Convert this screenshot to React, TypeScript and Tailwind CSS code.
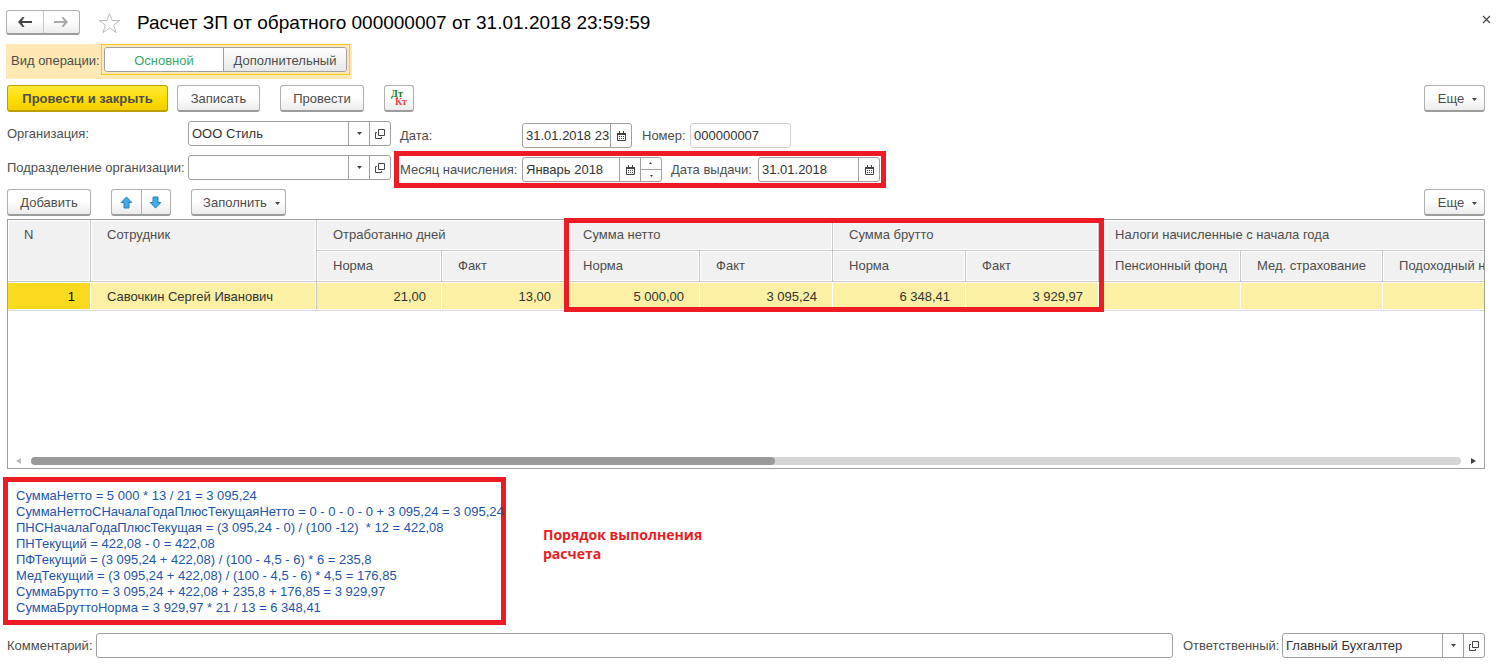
import type { ReactNode } from "react";
import clsx from "clsx";

/**
 * App.tsx
 *
 * Payroll document form ("Расчет ЗП от обратного"): command bar, document
 * header fields, employee grid and the step-by-step calculation below it.
 */

const FIELD = "flex h-[25px] overflow-hidden rounded-[3px] border border-[#a0a0a0] bg-white text-[#333]";
const INPUT = "min-w-0 flex-1 bg-transparent pl-[3px] outline-none";
const FIELD_BUTTON = "flex w-[21px] shrink-0 items-center justify-center border-l border-[#a0a0a0]";
const RAISED =
  "rounded-[3px] border border-[#b0b0b0] border-b-2 border-b-[#9c9c9c] bg-linear-to-b from-white from-45% to-[#ebebeb]";

function Caret() {
  return (
    <svg width="5" height="3" viewBox="0 0 5 3" fill="#444" aria-hidden="true">
      <path d="M0 0h5L2.5 3z" />
    </svg>
  );
}

function OpenIcon() {
  return (
    <svg width="10" height="10" viewBox="0 0 10 10" fill="none" stroke="#444" aria-hidden="true">
      <path d="M3.5.5h6v6h-6zM2 3.500H.5v6h6V8" />
    </svg>
  );
}

function CalendarIcon() {
  return (
    <svg width="9" height="10" viewBox="0 0 9 10" fill="none" stroke="#444" aria-hidden="true">
      <path d="M.5 2.500h8v7h-8z" />
      <path d="M0 3h9" strokeWidth="2" />
      <path d="M2.500 0v2M6.500 0v2" />
      <path d="M2 5.500h5M2 7.500h5" strokeDasharray="1 1" />
    </svg>
  );
}

function ArrowIcon({ back = false }: { back?: boolean }) {
  return (
    <svg
      width="14"
      height="10"
      viewBox="0 0 14 10"
      fill={back ? "#444" : "#aaa"}
      className={clsx(!back && "rotate-180")}
      aria-hidden="true"
    >
      <path d="M0 5 4.500 0H6.500L4 4h10v2H4l2.500 4H4.500z" />
    </svg>
  );
}

function MoveIcon({ down = false }: { down?: boolean }) {
  return (
    <svg
      width="13"
      height="13"
      viewBox="0 0 13 13"
      fill="#42aaea"
      stroke="#2d7fb5"
      className={clsx(down && "rotate-180")}
      aria-hidden="true"
    >
      <path d="M6.500.9 11.800 6.500H9v5.500H4V6.500H1.200z" />
    </svg>
  );
}

/** Red frame drawn over the block it sits in. */
function Mark({ className }: { className: string }) {
  return <div className={clsx("pointer-events-none absolute border-[5px] border-[#ed1c24]", className)} />;
}

function CommandButton({ children, className }: { children: ReactNode; className?: string }) {
  return (
    <button type="button" className={clsx("flex h-[27px] items-center justify-center pt-0.5", RAISED, className)}>
      {children}
    </button>
  );
}

function MoreButton() {
  return (
    <CommandButton className="ml-auto w-[61px] gap-2 pl-1.5">
      Еще <Caret />
    </CommandButton>
  );
}

function RefField({ id, value, className }: { id: string; value: string; className?: string }) {
  return (
    <div className={clsx(FIELD, className)}>
      <div className="relative min-w-0 flex-1">
        <select id={id} defaultValue={value} className="h-full w-full appearance-none pl-[3px] outline-none">
          <option value={value}>{value}</option>
        </select>
        <span className={clsx(FIELD_BUTTON, "pointer-events-none absolute inset-y-0 right-0 bg-white")}>
          <Caret />
        </span>
      </div>
      <button type="button" aria-label="Открыть" className={FIELD_BUTTON}>
        <OpenIcon />
      </button>
    </div>
  );
}

function DateField({
  id,
  value,
  className,
  children,
}: {
  id: string;
  value: string;
  className: string;
  children?: ReactNode;
}) {
  return (
    <div className={clsx(FIELD, className)}>
      <input id={id} type="text" defaultValue={value} className={INPUT} />
      <button type="button" aria-label="Выбрать" className={FIELD_BUTTON}>
        <CalendarIcon />
      </button>
      {children}
    </div>
  );
}

const GROUPS = [
  { title: "Отработанно дней", columns: ["Норма", "Факт"] },
  { title: "Сумма нетто", columns: ["Норма", "Факт"] },
  { title: "Сумма брутто", columns: ["Норма", "Факт"] },
  { title: "Налоги начисленные с начала года", columns: ["Пенсионный фонд", "Мед. страхование", "Подоходный налог"] },
];

const ROWS = [
  {
    name: "Савочкин Сергей Иванович",
    values: ["21,00", "13,00", "5 000,00", "3 095,24", "6 348,41", "3 929,97", "", "", ""],
  },
];

const STEPS = [
  "СуммаНетто = 5 000 * 13 / 21 = 3 095,24",
  "СуммаНеттоСНачалаГодаПлюсТекущаяНетто = 0 - 0 - 0 - 0 + 3 095,24 = 3 095,24",
  "ПНСНачалаГодаПлюсТекущая = (3 095,24 - 0) / (100 -12)  * 12 = 422,08",
  "ПНТекущий = 422,08 - 0 = 422,08",
  "ПФТекущий = (3 095,24 + 422,08) / (100 - 4,5 - 6) * 6 = 235,8",
  "МедТекущий = (3 095,24 + 422,08) / (100 - 4,5 - 6) * 4,5 = 176,85",
  "СуммаБрутто = 3 095,24 + 422,08 + 235,8 + 176,85 = 3 929,97",
  "СуммаБруттоНорма = 3 929,97 * 21 / 13 = 6 348,41",
];

const HEAD =
  "border-r border-b border-[#c8c8c8] bg-[#f1f1f1] px-4 text-left align-top font-normal leading-[30px] shadow-[inset_0_0_0_1px_#fff]";
const CELL = "h-[29px] border-b border-[#ddd] px-4 pt-0.5 shadow-[inset_0_1px_0_#fff,inset_-1px_-1px_0_#fff]";

function EmployeeTable() {
  return (
    <div className="relative flex min-h-[250px] flex-1 flex-col border border-[#a0a0a0]">
      <div className="flex-1 overflow-hidden">
        <table className="w-[1535px] table-fixed border-separate border-spacing-0 whitespace-nowrap">
          <colgroup>
            <col className="w-[83px]" />
            <col className="w-[226px]" />
            <col className="w-[125px]" />
            <col className="w-[125px]" />
            <col className="w-[133px]" />
            <col className="w-[133px]" />
            <col className="w-[133px]" />
            <col className="w-[133px]" />
            <col className="w-[142px]" />
            <col className="w-[142px]" />
            <col />
          </colgroup>
          <thead>
            <tr>
              <th rowSpan={2} className={HEAD}>
                N
              </th>
              <th rowSpan={2} className={HEAD}>
                Сотрудник
              </th>
              {GROUPS.map((group) => (
                <th key={group.title} colSpan={group.columns.length} className={HEAD}>
                  {group.title}
                </th>
              ))}
            </tr>
            <tr>
              {GROUPS.flatMap((group) =>
                group.columns.map((column) => (
                  <th key={group.title + column} className={HEAD}>
                    {column}
                  </th>
                )),
              )}
            </tr>
          </thead>
          <tbody className="text-[#333]">
            {ROWS.map((row, i) => (
              <tr key={row.name} className="bg-[#fcf0a5]">
                <td className={clsx(CELL, "bg-[#fbda1f] text-right text-black")}>{i + 1}</td>
                <td className={clsx(CELL, "border-r border-r-[#c8c8c8]")}>{row.name}</td>
                {row.values.map((value, j) => (
                  <td key={j} className={clsx(CELL, "text-right")}>
                    {value}
                  </td>
                ))}
              </tr>
            ))}
          </tbody>
        </table>
      </div>
      <div className="flex h-[15px] items-center gap-2.5 px-2">
        <svg width="5" height="6" viewBox="0 0 5 6" fill="#bbb" aria-hidden="true">
          <path d="M5 0v6L0 3z" />
        </svg>
        <div className="h-2 flex-1 rounded-full bg-[#d5d5d5]">
          <div className="h-2 w-[52%] rounded-full bg-[#999]" />
        </div>
        <svg width="5" height="6" viewBox="0 0 5 6" fill="#444" aria-hidden="true">
          <path d="M0 0v6l5-3z" />
        </svg>
      </div>
      <Mark className="-top-0.5 left-[556px] h-[94px] w-[540px]" />
    </div>
  );
}

export default function App() {
  return (
    <div className="flex min-h-screen flex-col bg-white pb-[9px] font-['Liberation_Sans',Arial,sans-serif] text-[13px] leading-4 text-[#4d4d4d]">
      <header className="flex items-center pt-2.5 pr-[7px] pl-1.5">
        <div className={clsx("flex h-[25px] w-[74px]", RAISED)}>
          <button type="button" aria-label="Назад" className="flex flex-1 items-center justify-center">
            <ArrowIcon back />
          </button>
          <button
            type="button"
            aria-label="Вперед"
            className="flex flex-1 items-center justify-center border-l border-[#c8c8c8]"
          >
            <ArrowIcon />
          </button>
        </div>
        <button type="button" aria-label="В избранное" className="ml-[18px]">
          <svg width="23" height="22" viewBox="0 0 23 22" fill="none" stroke="#b8bcc4" aria-hidden="true">
            <path d="m11.500 1.500 2.600 7h7.700l-6.200 4.600 2.300 7.400-6.400-4.500-6.400 4.500 2.300-7.400L1.200 8.500h7.700z" />
          </svg>
        </button>
        <h1 className="ml-4 text-[19px] leading-6 text-black">Расчет ЗП от обратного 000000007 от 31.01.2018 23:59:59</h1>
        <button type="button" aria-label="Закрыть" className="ml-auto -mt-1.5">
          <svg width="9" height="9" viewBox="0 0 9 9" stroke="#444" strokeWidth="1.200" aria-hidden="true">
            <path d="m1 1 7 7M8 1 1 8" />
          </svg>
        </button>
      </header>

      <main className="flex flex-1 flex-col pr-[13px] pl-[7px]">
        <fieldset className="mt-[9px] -ml-px flex h-[35px] w-[346px] items-center bg-[#ffe8b3] pl-[5px]">
          <span className="w-[90px] pt-0.5">Вид операции:</span>
          <div className="flex h-[31px] w-[249px] border border-[#fcc820] p-0.5">
            <div className="flex flex-1 overflow-hidden rounded-[3px] border border-[#a0a0a0]">
              <label className="flex w-[118px] items-center justify-center bg-white pt-0.5 text-[#37a76b]">
                <input type="radio" name="kind" defaultChecked className="sr-only" />
                Основной
              </label>
              <label className="flex flex-1 items-center justify-center border-l border-[#a0a0a0] bg-linear-to-b from-white to-[#e8e8e8] pt-0.5">
                <input type="radio" name="kind" className="sr-only" />
                Дополнительный
              </label>
            </div>
          </div>
        </fieldset>

        <div className="mt-1.5 flex">
          <button
            type="button"
            className="h-[27px] w-[161px] rounded-[3px] border border-b-2 border-[#bd9f00] bg-linear-to-b from-[#ffe934] via-[#ffdf00] to-[#f3cf00] pt-0.5 font-bold"
          >
            Провести и закрыть
          </button>
          <CommandButton className="ml-[9px] w-[83px]">Записать</CommandButton>
          <CommandButton className="ml-5 w-[84px]">Провести</CommandButton>
          <CommandButton className="ml-5 w-[30px]">
            <span className="flex flex-col pb-0.5 font-['Liberation_Serif',serif] text-[10px] leading-[8px] font-bold">
              <span className="pr-1 text-[#1a7a10]">Дт</span>
              <span className="pl-1 text-[#f04040]">Кт</span>
            </span>
          </CommandButton>
          <MoreButton />
        </div>

        <div className="mt-[9px] flex gap-[9px]">
          <div className="grid grid-cols-[181px_203px] content-start items-center gap-y-[9px]">
            <label htmlFor="org">Организация:</label>
            <RefField id="org" value="ООО Стиль" />
            <label htmlFor="dept" className="whitespace-nowrap">
              Подразделение организации:
            </label>
            <RefField id="dept" value="" />
          </div>
          <div className="flex flex-col gap-[9px] pt-0.5">
            <div className="flex items-center">
              <label htmlFor="date" className="w-[122px]">
                Дата:
              </label>
              <DateField id="date" value="31.01.2018 23" className="w-[110px]" />
              <label htmlFor="number" className="ml-2.5 w-12">
                Номер:
              </label>
              <input
                id="number"
                type="text"
                readOnly
                defaultValue="000000007"
                className="h-[25px] w-[101px] rounded-[3px] border border-[#d0d0d0] pl-[3px] text-[#333] outline-none"
              />
            </div>
            <div className="relative flex items-center">
              <label htmlFor="month" className="w-[122px] whitespace-nowrap">
                Месяц начисления:
              </label>
              <DateField id="month" value="Январь 2018" className="w-[140px]">
                <span className="flex w-[21px] shrink-0 flex-col border-l border-[#a0a0a0]">
                  <button type="button" aria-label="Больше" className="flex flex-1 rotate-180 items-center justify-center">
                    <svg width="3" height="2" viewBox="0 0 3 2" fill="#444">
                      <path d="M0 0h3L1.500 2z" />
                    </svg>
                  </button>
                  <button
                    type="button"
                    aria-label="Меньше"
                    className="flex flex-1 items-center justify-center border-t border-[#a0a0a0]"
                  >
                    <svg width="3" height="2" viewBox="0 0 3 2" fill="#444">
                      <path d="M0 0h3L1.500 2z" />
                    </svg>
                  </button>
                </span>
              </DateField>
              <label htmlFor="paid" className="ml-[9px] w-[87px] whitespace-nowrap">
                Дата выдачи:
              </label>
              <DateField id="paid" value="31.01.2018" className="w-[122px]" />
              <Mark className="-inset-x-1.5 -inset-y-1.5" />
            </div>
          </div>
        </div>

        <div className="mt-[7px] mb-[3px] flex">
          <CommandButton className="w-[84px]">Добавить</CommandButton>
          <div className={clsx("ml-5 flex h-[27px] w-[60px]", RAISED)}>
            <button type="button" aria-label="Вверх" className="flex flex-1 items-center justify-center">
              <MoveIcon />
            </button>
            <button
              type="button"
              aria-label="Вниз"
              className="flex flex-1 items-center justify-center border-l border-[#b0b0b0]"
            >
              <MoveIcon down />
            </button>
          </div>
          <CommandButton className="ml-5 w-[95px] gap-2 pl-1.5">
            Заполнить <Caret />
          </CommandButton>
          <MoreButton />
        </div>

        <EmployeeTable />

        <div className="mt-2 -ml-1 flex gap-[37px]">
          <div className="w-[503px] border-[5px] border-[#ed1c24] px-2 pt-1.5 pb-1 whitespace-pre text-[#1c55ae]">
            {STEPS.map((step) => (
              <p key={step}>{step}</p>
            ))}
          </div>
          <p className="mt-12 w-44 font-['Open_Sans',sans-serif] text-[14px] leading-[19px] font-bold text-[#ed1c24]">
            Порядок выполнения расчета
          </p>
        </div>

        <div className="mt-2 flex items-center">
          <label htmlFor="comment" className="w-[89px]">
            Комментарий:
          </label>
          <input
            id="comment"
            type="text"
            className="h-[25px] min-w-0 flex-1 rounded-[3px] border border-[#a0a0a0] pl-[3px] text-[#333] outline-none"
          />
          <label htmlFor="owner" className="ml-2.5 w-[99px] whitespace-nowrap">
            Ответственный:
          </label>
          <RefField id="owner" value="Главный Бухгалтер" className="w-[203px]" />
        </div>
      </main>
    </div>
  );
}
